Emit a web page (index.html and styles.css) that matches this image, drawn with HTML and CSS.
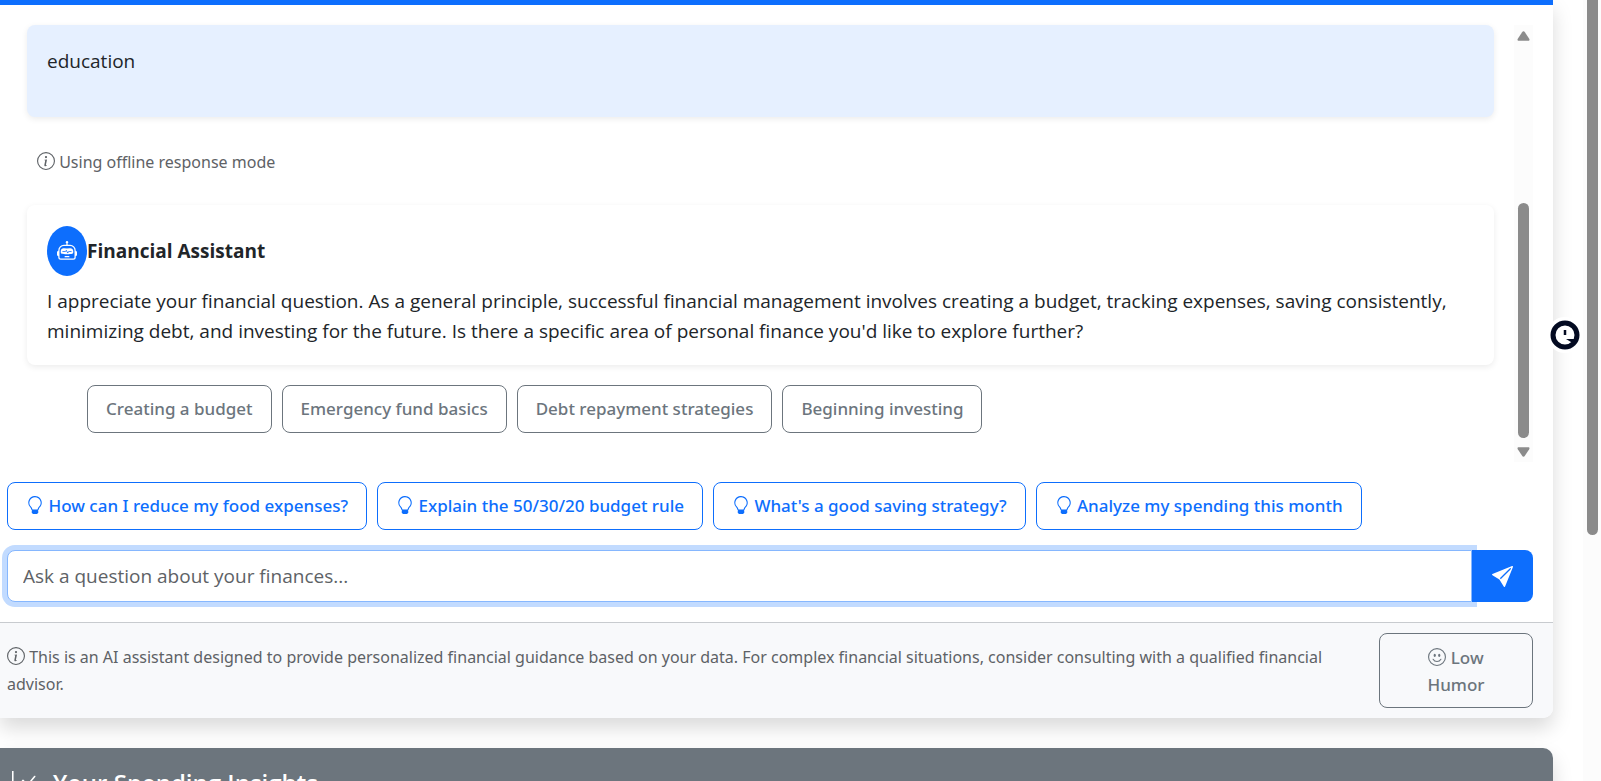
FILE: index.html
```
<!DOCTYPE html>
<html lang="en">
<head>
<meta charset="utf-8">
<title>Financial Assistant</title>
<link rel="stylesheet" href="styles.css">
</head>
<body>
<svg class="sprite" aria-hidden="true">
  <symbol id="info" viewBox="0 0 16 16"><path d="M8 15A7 7 0 1 1 8 1a7 7 0 0 1 0 14m0 1A8 8 0 1 0 8 0a8 8 0 0 0 0 16"/><path d="m8.93 6.588-2.29.287-.082.38.45.083c.294.07.352.176.288.469l-.738 3.468c-.194.897.105 1.319.808 1.319.545 0 1.178-.252 1.465-.598l.088-.416c-.2.176-.492.246-.686.246-.275 0-.375-.193-.304-.533zM9 4.5a1 1 0 1 1-2 0 1 1 0 0 1 2 0"/></symbol>
  <symbol id="bulb" viewBox="0 0 16 16"><path d="M2 6a6 6 0 1 1 10.174 4.31c-.203.196-.359.4-.453.619l-.762 1.769A.5.5 0 0 1 10.5 13a.5.5 0 0 1 0 1 .5.5 0 0 1 0 1l-.224.447a1 1 0 0 1-.894.553H6.618a1 1 0 0 1-.894-.553L5.5 15a.5.5 0 0 1 0-1 .5.5 0 0 1 0-1 .5.5 0 0 1-.46-.302l-.761-1.77a2 2 0 0 0-.453-.618A5.98 5.98 0 0 1 2 6m6-5a5 5 0 0 0-3.479 8.592c.263.254.514.564.676.941L5.83 12h4.342l.632-1.467c.162-.377.413-.687.676-.941A5 5 0 0 0 8 1"/></symbol>
  <symbol id="robot" viewBox="0 0 16 16"><path d="M6 12.5a.5.5 0 0 1 .5-.5h3a.5.5 0 0 1 0 1h-3a.5.5 0 0 1-.5-.5M3 8.062C3 6.76 4.235 5.765 5.53 5.886a26.6 26.6 0 0 0 4.94 0C11.765 5.765 13 6.76 13 8.062v1.157a.93.93 0 0 1-.765.935c-.845.147-2.34.346-4.235.346s-3.39-.2-4.235-.346A.93.93 0 0 1 3 9.219zm4.542-.827a.25.25 0 0 0-.217.068l-.92.9a25 25 0 0 1-1.871-.183.25.25 0 0 0-.068.495c.55.076 1.232.149 2.02.193a.25.25 0 0 0 .189-.071l.754-.736.847 1.71a.25.25 0 0 0 .404.062l.932-.97a25 25 0 0 0 1.922-.188.25.25 0 0 0-.068-.495c-.538.074-1.207.145-1.98.189a.25.25 0 0 0-.166.076l-.754.785-.842-1.7a.25.25 0 0 0-.182-.135"/><path d="M8.5 1.866a1 1 0 1 0-1 0V3h-2A4.5 4.5 0 0 0 1 7.5V8a1 1 0 0 0-1 1v2a1 1 0 0 0 1 1v1a2 2 0 0 0 2 2h10a2 2 0 0 0 2-2v-1a1 1 0 0 0 1-1V9a1 1 0 0 0-1-1v-.5A4.5 4.5 0 0 0 10.5 3h-2zM14 7.5V13a1 1 0 0 1-1 1H3a1 1 0 0 1-1-1V7.5A3.5 3.5 0 0 1 5.5 4h5A3.5 3.5 0 0 1 14 7.5"/></symbol>
  <symbol id="send" viewBox="0 0 16 16"><path d="M15.964.686a.5.5 0 0 0-.65-.65L.767 5.855H.766l-.452.18a.5.5 0 0 0-.082.887l.41.26.001.002 4.995 3.178 3.178 4.995.002.002.26.41a.5.5 0 0 0 .886-.083zm-1.833 1.89L6.637 10.07l-.215-.338a.5.5 0 0 0-.154-.154l-.338-.215 7.494-7.494 1.178-.471z"/></symbol>
  <symbol id="smile" viewBox="0 0 16 16"><path d="M8 15A7 7 0 1 1 8 1a7 7 0 0 1 0 14m0 1A8 8 0 1 0 8 0a8 8 0 0 0 0 16"/><path d="M4.285 9.567a.5.5 0 0 1 .683.183A3.5 3.5 0 0 0 8 11.5a3.5 3.5 0 0 0 3.032-1.75.5.5 0 1 1 .866.5A4.5 4.5 0 0 1 8 12.5a4.5 4.5 0 0 1-3.898-2.25.5.5 0 0 1 .183-.683M7 6.5C7 7.328 6.552 8 6 8s-1-.672-1-1.5S5.448 5 6 5s1 .672 1 1.5m4 0c0 .828-.448 1.5-1 1.5s-1-.672-1-1.5S9.448 5 10 5s1 .672 1 1.5"/></symbol>
  <symbol id="graph" viewBox="0 0 16 16"><path fill-rule="evenodd" d="M0 0h1v15h15v1H0zm14.817 3.113a.5.5 0 0 1 .07.704l-4.5 5.5a.5.5 0 0 1-.74.037L7.06 6.767l-3.656 5.027a.5.5 0 0 1-.808-.588l4-5.5a.5.5 0 0 1 .758-.06l2.609 2.61 4.15-5.073a.5.5 0 0 1 .704-.07"/></symbol>
  <symbol id="arrow-up" viewBox="0 0 13 10"><path d="M6.500 0.300C7.100 .3 7.500.7 7.900 1.200L12.200 7.800C12.800 8.900 12.400 9.700 11.300 9.700H1.700C.6 9.700.2 8.900.8 7.800L5.100 1.200C5.500.7 5.900.3 6.500.3Z"/></symbol>
</svg>
<div class="page">
  <main class="content">
    <section class="card">
      <div class="card-header"></div>
      <div class="card-body">
        <div class="chat">
          <div class="messages">
            <div class="message message-user"><p>education</p></div>
            <p class="note"><svg class="icon"><use href="#info"/></svg> Using offline response mode</p>
            <div class="message">
              <div class="sender"><span class="avatar"><svg class="icon"><use href="#robot"/></svg></span><strong>Financial Assistant</strong></div>
              <p>I appreciate your financial question. As a general principle, successful financial management involves creating a budget, tracking expenses, saving consistently, minimizing debt, and investing for the future. Is there a specific area of personal finance you'd like to explore further?</p>
            </div>
            <div class="replies">
              <button class="btn btn-gray" type="button">Creating a budget</button>
              <button class="btn btn-gray" type="button">Emergency fund basics</button>
              <button class="btn btn-gray" type="button">Debt repayment strategies</button>
              <button class="btn btn-gray" type="button">Beginning investing</button>
            </div>
          </div>
          <div class="scrollbar" aria-hidden="true">
            <svg class="arrow"><use href="#arrow-up"/></svg>
            <div class="track"><div class="thumb"></div></div>
            <svg class="arrow arrow-down"><use href="#arrow-up"/></svg>
          </div>
        </div>
        <div class="suggestions">
          <button class="btn btn-blue" type="button"><svg class="icon"><use href="#bulb"/></svg> How can I reduce my food expenses?</button>
          <button class="btn btn-blue" type="button"><svg class="icon"><use href="#bulb"/></svg> Explain the 50/30/20 budget rule</button>
          <button class="btn btn-blue" type="button"><svg class="icon"><use href="#bulb"/></svg> What's a good saving strategy?</button>
          <button class="btn btn-blue" type="button"><svg class="icon"><use href="#bulb"/></svg> Analyze my spending this month</button>
        </div>
        <form class="ask">
          <input class="ask-input" type="text" aria-label="Question" placeholder="Ask a question about your finances...">
          <button class="send" type="button" aria-label="Send"><svg class="icon"><use href="#send"/></svg></button>
        </form>
      </div>
      <footer class="card-footer">
        <p><svg class="icon"><use href="#info"/></svg> This is an AI assistant designed to provide personalized financial guidance based on your data. For complex financial situations, consider consulting with a qualified financial advisor.</p>
        <button class="btn btn-gray humor" type="button"><svg class="icon"><use href="#smile"/></svg> Low<br>Humor</button>
      </footer>
    </section>
    <section class="card insights">
      <h2><svg class="icon"><use href="#graph"/></svg>Your Spending Insights</h2>
    </section>
  </main>
  <div class="page-scroll" aria-hidden="true"><div class="page-thumb"></div></div>
</div>
<button class="widget" type="button" aria-label="Open widget">
  <svg viewBox="0 0 36 36"><circle cx="18" cy="18" r="18" fill="#fff"/><circle cx="18" cy="18" r="12" fill="#fff" stroke="#030a21" stroke-width="5"/><path d="M18 13v5" stroke="#030a21" stroke-width="2.500"/><path d="M19 22h10v3h-5z" fill="#030a21"/></svg>
</button>
</body>
</html>
```
FILE: styles.css
```
* { box-sizing: border-box; }
body {
  margin: 0;
  height: 100vh;
  overflow: hidden;
  background: #fff;
  color: #212529;
  font: 19px/30px "Open Sans", "Noto Sans", sans-serif;
}
p, h2 { margin: 0; }
button, input { font-family: inherit; }
.sprite { position: absolute; width: 0; height: 0; }
.icon { width: 18px; height: 18px; fill: currentColor; vertical-align: -2px; }

.page { display: grid; grid-template-columns: 1fr 18px; height: 100%; }
.content { padding-right: 30px; display: flex; flex-direction: column; gap: 30px; overflow: hidden; }
.card {
  flex: none;
  background: #fff;
  border-radius: 0 0 10px 0;
  box-shadow: 0 10px 20px rgba(0, 0, 0, 0.15);
}
.card-header { height: 5px; background: #0d6efd; }
.card-body { padding: 20px 20px 20px 7px; }

.chat { display: flex; height: 437px; }
.messages { flex: 1; padding: 0 20px; }
.message {
  padding: 21px 20px 19px;
  border-radius: 8px;
  background: #fff;
  box-shadow: 0 2px 6px rgba(0, 0, 0, 0.08);
}
.message-user { background: #e6f0ff; padding-bottom: 41px; }
.note { margin: 32px 10px 30px; font-family: "Noto Sans", sans-serif; font-size: 16px; line-height: 26px; color: #5e6266; }
.sender { display: flex; align-items: center; height: 50px; margin-bottom: 10px; }
.avatar {
  display: flex;
  align-items: center;
  justify-content: center;
  width: 40px;
  height: 50px;
  border-radius: 50%;
  background: #0d6efd;
  color: #fff;
}
.avatar .icon { width: 20px; height: 20px; }
.replies { display: flex; gap: 10px; margin: 20px 0 0 60px; }

.btn {
  padding: 10px 18px;
  border: 1px solid;
  border-radius: 8px;
  background: transparent;
  font-family: "Noto Sans", sans-serif;
  font-size: 17px;
  font-weight: 500;
  line-height: 26px;
  white-space: nowrap;
}
.btn-gray { color: #6c757d; }
.btn-blue { color: #0d6efd; }

.scrollbar {
  width: 19px;
  padding: 6px 0 5px;
  display: flex;
  flex-direction: column;
  align-items: center;
  background: #fcfcfc;
}
.arrow { width: 13px; height: 10px; fill: #8b8b8b; }
.arrow-down { transform: rotate(180deg); }
.track { flex: 1; width: 11px; display: flex; flex-direction: column; justify-content: flex-end; padding-bottom: 9px; }
.thumb { height: 235px; border-radius: 6px; background: #8b8b8b; }

.suggestions { display: flex; gap: 10px; margin: 20px 0; }
.ask { display: flex; }
.ask-input {
  flex: 1;
  height: 52px;
  padding: 0 15px;
  border: 1px solid #86b7fe;
  border-radius: 8px 0 0 8px;
  box-shadow: 0 0 0 5px #c2dbff;
  font-size: 19px;
  color: #212529;
}
.ask-input::placeholder { color: #5e6266; opacity: 1; }
.send {
  position: relative;
  width: 61px;
  border: 0;
  border-radius: 0 8px 8px 0;
  background: #0d6efd;
  color: #fff;
}
.send .icon { width: 21px; height: 21px; vertical-align: middle; }

.card-footer {
  display: flex;
  align-items: center;
  gap: 20px;
  padding: 10px 20px 10px 7px;
  border-top: 1px solid #c8cbcf;
  border-radius: 0 0 10px 0;
  background: #f8f9fb;
  color: #5e6266;
  font-family: "Noto Sans", sans-serif;
  font-size: 16px;
  line-height: 27px;
}
.card-footer p { flex: 1; }
.humor { width: 154px; padding-bottom: 9px; line-height: 27px; }

.insights { border-radius: 0 10px 0 0; background: #6c757d; color: #fff; padding: 17px 20px 20px 12px; }
.insights h2 { display: flex; align-items: center; gap: 16px; font-size: 24px; line-height: 36px; font-weight: 600; }
.insights .icon { width: 25px; height: 25px; }

.page-scroll { display: flex; justify-content: center; background: #fcfcfc; }
.page-thumb { width: 11px; height: 535px; border-radius: 0 0 6px 6px; background: #8b8b8b; }

.widget { position: absolute; top: 317px; right: 18px; width: 36px; height: 36px; padding: 0; border: 0; background: none; }
.widget svg { display: block; width: 36px; height: 36px; }
```
